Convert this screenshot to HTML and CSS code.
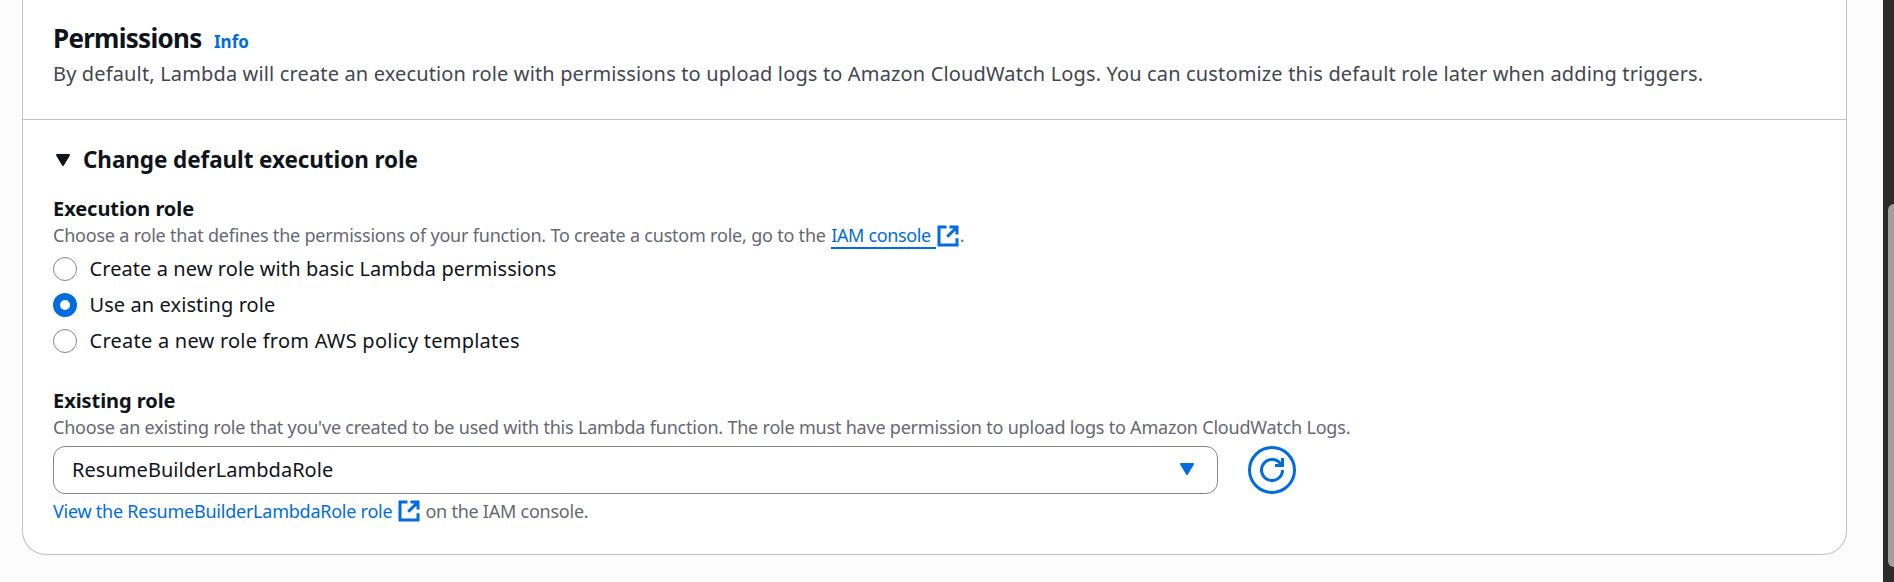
FILE: index.html
```html
<!DOCTYPE html>
<html lang="en">
<head>
<meta charset="utf-8">
<title>Create function</title>
<link rel="stylesheet" href="styles.css">
</head>
<body>
<div class="page">
<main class="main">
<section class="panel">
<header class="panel-header">
<div class="title-row"><h2 class="title">Permissions</h2><a class="info">Info</a></div>
<p class="description">By default, Lambda will create an execution role with permissions to upload logs to Amazon CloudWatch Logs. You can customize this default role later when adding triggers.</p>
</header>
<div class="panel-body">
<h3 class="expander"><svg class="caret" viewBox="0 0 18 14"><path d="M4 2h12L10 12z"/></svg><span>Change default execution role</span></h3>
<div class="field">
<div class="label">Execution role</div>
<div class="hint"><span>Choose a role that defines the permissions of your function. To create a custom role, go to the</span><a class="link underlined">IAM console</a><svg class="external" viewBox="0 0 16 16"><path d="M7 2H2v12h12V9.5M9 2h5v5M7.5 8.5L14 2"/></svg><span>.</span></div>
<div class="radios">
<label class="radio"><i class="dot"></i><span>Create a new role with basic Lambda permissions</span></label>
<label class="radio"><i class="dot checked"></i><span>Use an existing role</span></label>
<label class="radio wide"><i class="dot"></i><span>Create a new role from AWS policy templates</span></label>
</div>
</div>
<div class="field existing">
<div class="label">Existing role</div>
<div class="hint">Choose an existing role that you've created to be used with this Lambda function. The role must have permission to upload logs to Amazon CloudWatch Logs.</div>
<div class="control-row">
<div class="select"><span>ResumeBuilderLambdaRole</span><svg class="caret blue" viewBox="0 0 18 14"><path d="M3 2h12L9 12z"/></svg></div>
<button class="refresh" aria-label="Refresh roles"><svg viewBox="0 0 16 16"><path d="M15 8a7 7 0 1 1-.9-3.4M10 5h5V0"/></svg></button>
</div>
<div class="hint view"><a class="link">View the ResumeBuilderLambdaRole role</a><svg class="external" viewBox="0 0 16 16"><path d="M7 2H2v12h12V9.5M9 2h5v5M7.5 8.5L14 2"/></svg><span>on the IAM console.</span></div>
</div>
</div>
</section>
</main>
<aside class="scrollbar"><div class="thumb"></div></aside>
</div>
</body>
</html>
```
FILE: styles.css
```css
* { box-sizing: border-box; margin: 0; padding: 0; }
body { background: #fcfcfd; font-family: "Noto Sans", sans-serif; font-size: 20px; color: #0f141a; overflow: hidden; }
.page { display: flex; height: 582px; }
.main { flex: 1; padding: 0 36px 27px 22px; }
.panel { height: 555px; background: #fff; border: 1px solid #c0c0c6; border-top: 0; border-radius: 0 0 24px 24px; }
.panel-header { height: 120px; padding: 20px 30px 0; border-bottom: 1px solid #c0c0c6; }
.title-row { display: flex; align-items: baseline; gap: 12.5px; }
.title { font-size: 26px; line-height: 36px; letter-spacing: -0.73px; }
.info { font-size: 17px; font-weight: 700; color: #006ce0; }
.description { margin-top: 3px; line-height: 30px; letter-spacing: 0.147px; color: #424650; white-space: nowrap; }
.panel-body { padding: 25px 30px 0; }
.expander { display: flex; align-items: center; gap: 12px; font-size: 22.5px; line-height: 30px; letter-spacing: -0.09px; }
.caret { width: 18px; height: 14px; fill: currentColor; stroke: currentColor; stroke-width: 2; stroke-linejoin: round; }
.blue { color: #006ce0; }
.field { margin-top: 19px; }
.existing { margin-top: 33px; }
.label { height: 29px; font-weight: 700; line-height: 30px; letter-spacing: -0.06px; }
.hint { display: flex; font-size: 18px; line-height: 24px; letter-spacing: -0.208px; color: #656871; white-space: nowrap; }
.link { color: #006ce0; }
.underlined { height: 26px; margin: 0 0 -2px 5.5px; padding-right: 5px; border-bottom: 2px solid #006ce0; letter-spacing: -0.37px; }
.external { flex: none; width: 24px; height: 24px; margin-top: 0.5px; fill: none; stroke: #006ce0; stroke-width: 2; }
.radios { display: flex; flex-direction: column; gap: 12px; margin-top: 9px; }
.radio { display: flex; gap: 12.5px; line-height: 24px; letter-spacing: 0.08px; }
.radio.wide { letter-spacing: 0.24px; }
.dot { width: 24px; height: 24px; border: 1.5px solid #85858e; border-radius: 50%; }
.dot.checked { border: 7px solid #006ce0; }
.control-row { display: flex; gap: 30px; margin: 7px 0 5px; }
.select { display: flex; align-items: center; justify-content: space-between; width: 1165px; height: 48px; padding: 0 21px 1px 18px; border: 1px solid #85858e; border-radius: 12px; letter-spacing: 0.04px; }
.view { gap: 4.5px; letter-spacing: -0.24px; }
.refresh { display: grid; place-items: center; width: 48px; height: 48px; border: 3px solid #006ce0; border-radius: 50%; background: #fff; }
.refresh svg { width: 24px; height: 24px; fill: none; stroke: #006ce0; stroke-width: 2; overflow: visible; }
.scrollbar { width: 11px; padding: 204px 0 0 5px; background: #2c2c2c; }
.thumb { height: 363px; background: #9f9f9f; border-radius: 6px 0 0 6px; }
```
